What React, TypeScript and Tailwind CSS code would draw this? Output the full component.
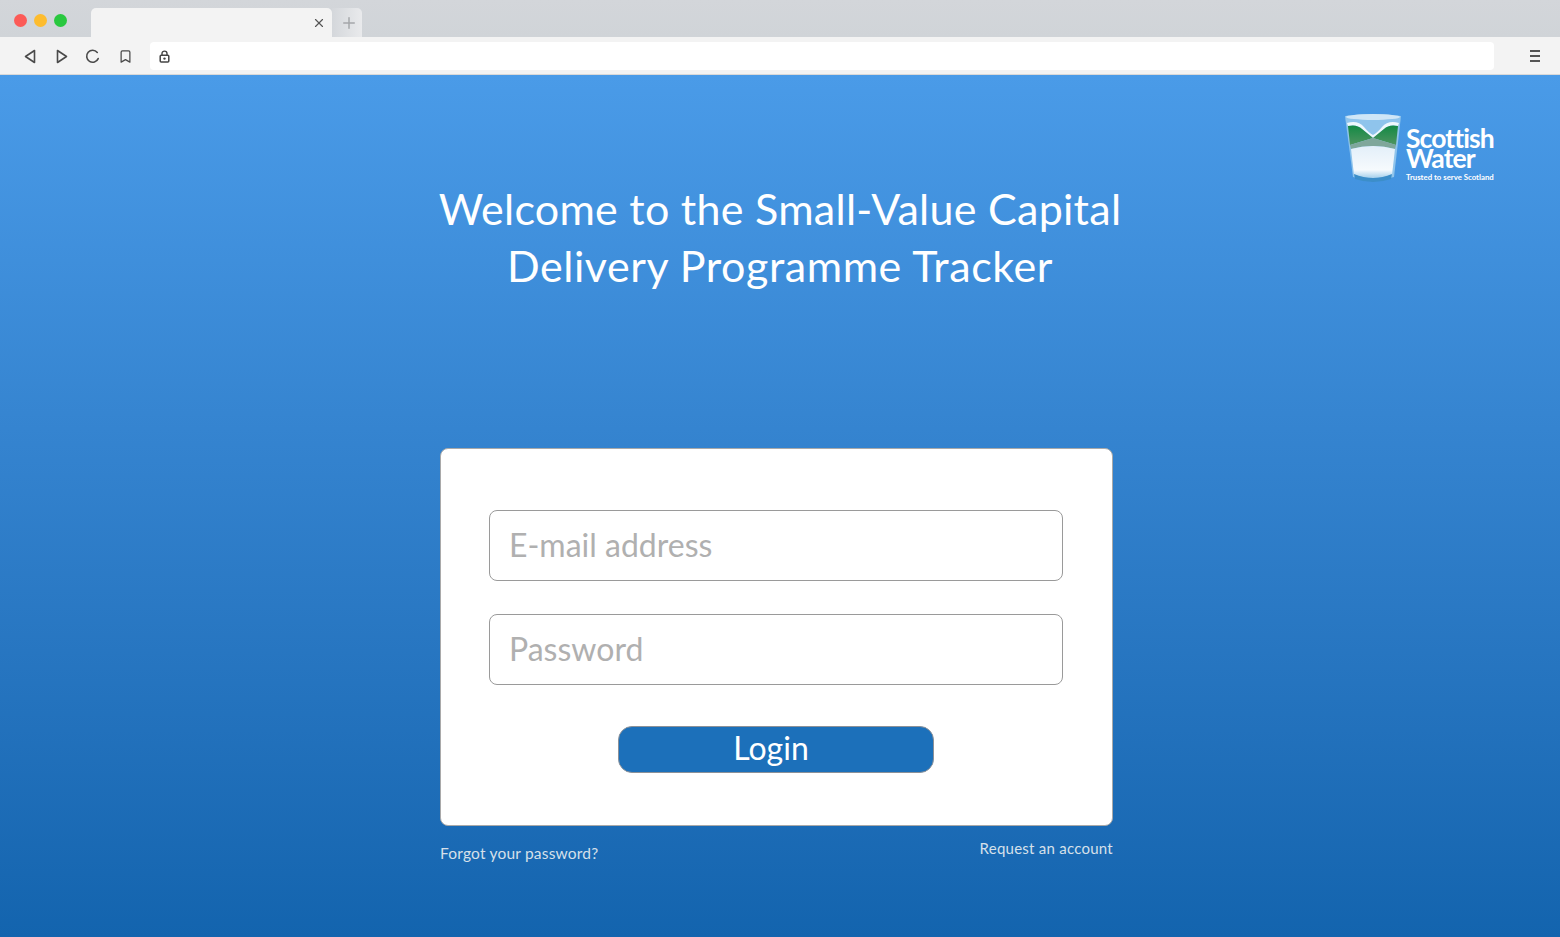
import { Bookmark, Plus, X } from 'lucide-react'

const font = { fontFamily: 'Lato, "Open Sans", sans-serif' }

function Glass() {
	return (
		<svg width="58" height="70" viewBox="0 0 58 70" className="shrink-0">
			<defs>
				<linearGradient id="green" x1="0" y1="0" x2="0" y2="1">
					<stop offset="0" stopColor="#138a45" />
					<stop offset="1" stopColor="#4f9460" />
				</linearGradient>
				<linearGradient id="water" x1="0" y1="0" x2="0" y2="1">
					<stop offset="0" stopColor="#e3eff9" />
					<stop offset="0.75" stopColor="#f6fafd" />
					<stop offset="1" stopColor="#a5d0ec" />
				</linearGradient>
			</defs>
			<path d="M1 3 Q29 -1 57 3 L50 64 Q29 71 9 64 Z" fill="#8fc4ec" />
			<ellipse cx="29" cy="4" rx="27" ry="3" fill="#cfe6f7" />
			<path d="M3 10 Q14 7 20 14 Q25 20 29 22 Q33 20 38 14 Q44 7 55 10 L54 13 Q45 11 40 16 L29 25 L18 16 Q13 11 4 13 Z" fill="#eef7fd" />
			<path d="M4 13 Q13 11 18 16 L29 25 L6 32 Z" fill="url(#green)" />
			<path d="M54 13 Q45 11 40 16 L29 25 L52 32 Z" fill="url(#green)" />
			<path d="M6 32 L29 25 L52 32 L51 36 Q29 30 7 36 Z" fill="#7fa79b" />
			<path d="M7 36 Q29 30 51 36 L48 62 Q29 68 10 62 Z" fill="url(#water)" />
			<path d="M10 61 Q29 69 48 61 L47 66 Q29 72 11 66 Z" fill="#3c8ec9" />
		</svg>
	)
}

export default function App() {
	return (
		<div className="flex h-[937px] w-[1560px] flex-col overflow-hidden" style={font}>
			{/* browser tab strip */}
			<div className="flex h-[37px] items-end bg-gradient-to-b from-[#d3d6da] to-[#d0d4d8]">
				<div className="flex h-[37px] w-[91px] items-center gap-[7px] pl-[14px] pt-[3px]">
					<span className="h-[13px] w-[13px] rounded-full bg-[#fc5b57]" />
					<span className="h-[13px] w-[13px] rounded-full bg-[#fdbc2e]" />
					<span className="h-[13px] w-[13px] rounded-full bg-[#29c83f]" />
				</div>
				<div className="flex h-[29px] w-[241px] items-center justify-end rounded-t-[5px] bg-[#f3f3f3] pr-[6px]">
					<X size={14} strokeWidth={2} className="text-[#555]" />
				</div>
				<div className="flex h-[29px] w-[30px] items-center justify-center rounded-tr-[5px] bg-gradient-to-r from-[#d4d7db] to-[#e9eaec] pl-[4px]">
					<Plus size={18} strokeWidth={2} className="text-[#a5a7aa]" />
				</div>
			</div>

			{/* browser toolbar */}
			<div className="flex h-[38px] items-center border-b border-[#d9d9d9] bg-[#f3f3f3] pt-px">
				<div className="flex w-[150px] items-center pl-[24px] text-[#4a4a4a]">
					<svg width="12" height="15" viewBox="0 0 12 15" fill="none" stroke="currentColor" strokeWidth="1.6" strokeLinejoin="round">
						<path d="M10.5 1.5 V13.5 L1.5 7.5 Z" />
					</svg>
					<svg width="12" height="15" viewBox="0 0 12 15" fill="none" stroke="currentColor" strokeWidth="1.6" strokeLinejoin="round" className="ml-[20px]">
						<path d="M1.5 1.5 V13.5 L10.5 7.5 Z" />
					</svg>
					<svg width="15" height="15" viewBox="0 0 15 15" fill="none" stroke="currentColor" strokeWidth="1.6" strokeLinecap="round" className="ml-[17px]">
						<path d="M12.3 3.4 A6 6 0 1 0 13.2 9.6" />
					</svg>
					<Bookmark size={15} strokeWidth={2} className="ml-[18px]" />
				</div>
				<div className="flex h-[28px] w-[1344px] items-center rounded-[4px] bg-white pl-[9px]">
					<svg width="11" height="13" viewBox="0 0 11 13" fill="none" className="text-[#444]">
						<path d="M3 5.5 V3.6 A2.5 2.5 0 0 1 8 3.6 V5.5" stroke="currentColor" strokeWidth="1.4" />
						<rect x="1.2" y="5.2" width="8.6" height="6.8" rx="1" stroke="currentColor" strokeWidth="1.5" />
						<circle cx="5.5" cy="8.6" r="1.2" fill="currentColor" />
					</svg>
				</div>
				<div className="ml-[36px] flex w-[10px] flex-col gap-[3px]">
					<span className="h-[2px] bg-[#555]" />
					<span className="h-[2px] bg-[#555]" />
					<span className="h-[2px] bg-[#555]" />
				</div>
			</div>

			{/* page */}
			<div className="flex flex-1 flex-col bg-gradient-to-b from-[#4a9be8] to-[#1364ae]">
				<div className="mt-[38px] flex h-[70px] justify-end pr-[66px]">
					<Glass />
					<div className="ml-[4px] flex w-[88px] flex-col text-white">
						<span className="mt-[15px] text-[26.5px] leading-[20px] font-bold tracking-[-0.9px]">
							Scottish
							<br />
							Water
						</span>
						<span className="mt-[5px] text-[7.8px] leading-[9px] font-bold whitespace-nowrap">Trusted to serve Scotland</span>
					</div>
				</div>
				<h1 className="mt-[-3px] text-center text-[43px] leading-[57px] font-normal tracking-[0.27px] text-white">
					Welcome to the Small-Value Capital
					<br />
					<span className="tracking-[0.57px]">Delivery Programme Tracker</span>
				</h1>
				<div className="ml-[440px] mt-[154px] w-[673px]">
					<form className="flex h-[378px] flex-col items-center rounded-[8px] border border-[#a9a9a9] bg-white pt-[61px] pr-[1px]">
						<input
							placeholder="E-mail address"
							className="h-[71px] w-[574px] rounded-[8px] border border-[#9a9a9a] px-[19px] pb-[3px] text-[32px] text-[#333] outline-none placeholder:text-[#b0b0b0]"
						/>
						<input
							placeholder="Password"
							className="mt-[33px] h-[71px] w-[574px] rounded-[8px] border border-[#9a9a9a] px-[19px] pb-[3px] text-[32px] text-[#333] outline-none placeholder:text-[#b0b0b0]"
						/>
						<button
							type="button"
							className="mt-[41px] h-[47px] w-[316px] rounded-[14px] border border-[#8c9198] bg-[#1c70ba] pr-[10px] pb-[4px] text-[32px] leading-none text-white"
						>
							Login
						</button>
					</form>
					<div className="mt-[11px] flex items-start justify-between text-[#d6e0ea]">
						<a className="mt-[5px] text-[15.5px] tracking-[0.2px]">Forgot your password?</a>
						<a className="text-[15px] tracking-[0.25px]">Request an account</a>
					</div>
				</div>
			</div>
		</div>
	)
}
